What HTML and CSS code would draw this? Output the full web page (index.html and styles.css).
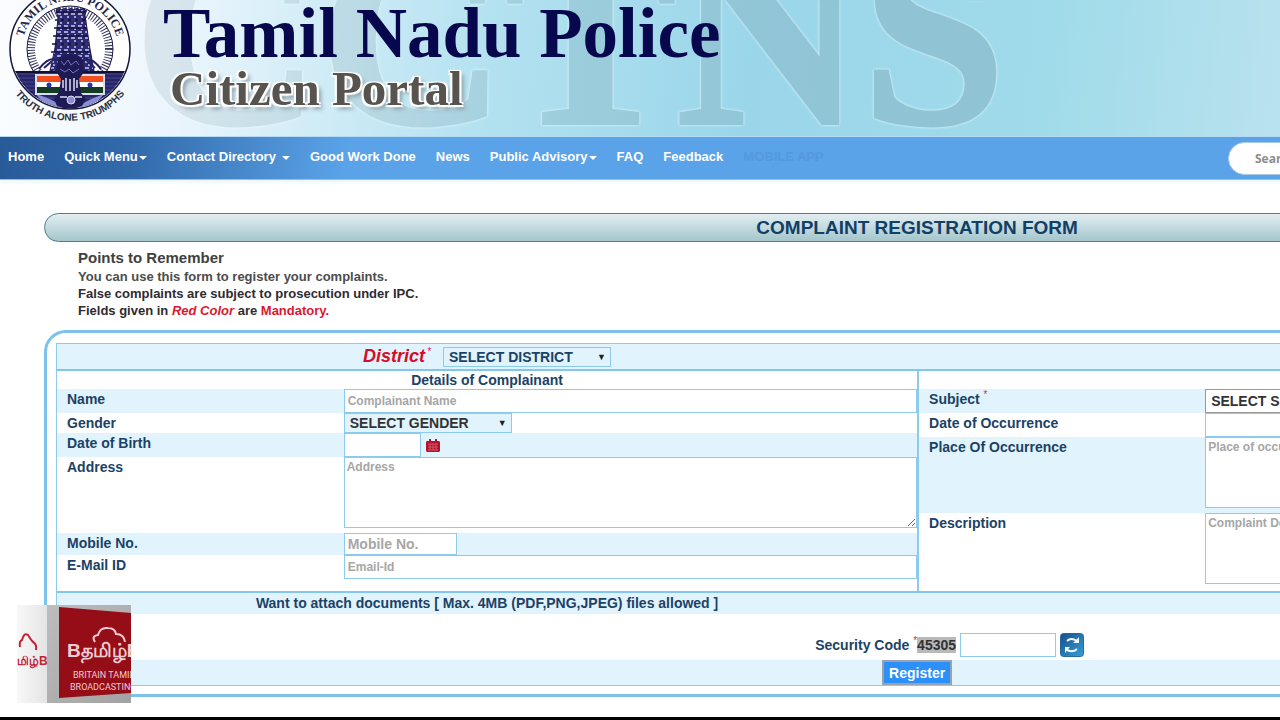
FILE: index.html
```
<!DOCTYPE html>
<html lang="en">
  <head>
    <meta charset="UTF-8" />
    <meta name="viewport" content="width=device-width, initial-scale=1.0" />
    <title>Tamil Nadu Police - Complaint Registration</title>
    <link rel="stylesheet" href="styles.css">
  </head>
  <body>
    <div class="page">
      <header class="banner">
        <svg class="watermark" width="1100" height="136" viewBox="0 0 1100 136" aria-hidden="true">
          <defs>
            <linearGradient id="fade" gradientUnits="userSpaceOnUse" x1="140" y1="0" x2="1000" y2="0">
              <stop offset="0" stop-color="#c9d9e0" />
              <stop offset="0.500" stop-color="#8fbecb" />
              <stop offset="1" stop-color="#82aebf" />
            </linearGradient>
          </defs>
          <text x="134" y="123" fill="url(#fade)" stroke="url(#fade)">CCTNS</text>
        </svg>
        <svg class="emblem" width="140" height="130" viewBox="0 0 140 130" role="img" aria-label="Tamil Nadu Police emblem">
          <defs>
            <path id="arc-top" d="M22 49 A48 48 0 0 1 118 49" />
            <path id="arc-bottom" d="M9 84 A69 69 0 0 0 131 84" />
            <clipPath id="disc"><circle cx="70" cy="49" r="59" /></clipPath>
            <pattern id="bricks" width="7" height="6" patternUnits="userSpaceOnUse">
              <rect width="7" height="6" fill="#2b2973" />
              <path d="M1 2h4M4 5h2" stroke="#c9c9ee" stroke-width="1.500" />
            </pattern>
          </defs>
          <circle cx="70" cy="49" r="60" fill="#fff" stroke="#15153a" stroke-width="1.500" />
          <circle cx="70" cy="49" r="43" fill="#fff" stroke="#15153a" stroke-width="1" />
          <circle cx="70" cy="49" r="39" fill="none" stroke="#33335c" stroke-width="8" stroke-dasharray="1 1.800" />
          <g clip-path="url(#disc)">
            <rect x="8" y="71" width="124" height="40" fill="#36347b" />
            <path d="M8 72h124" stroke="#101035" stroke-width="2" />
            <path d="M12 76h116M14 80h112M16 84h108M20 88h100M23 92h94M28 96h84M36 100h68M43 104h54" stroke="#191750" stroke-width="1" />
            <path d="M36 94Q52 99 58 104L82 104Q92 98 104 94L98 101L83 109H57L42 102Z" fill="#8b8ed3" />
          </g>
          <path d="M56 10l3-2 3 2 3-2 3 2 3-2 3 2 3-2 3 2 3-2 3 3-1 4 5 34 4 22H50l5-23 3-30Z" fill="url(#bricks)" stroke="#1a184f" />
          <path d="M56 12h29M55 20h31M54 28h33M53 36h35M52 44h37M51 52h40" stroke="#14123f" stroke-width="1.500" />
          <path d="M39 69q10-13 18-9M101 69q-10-13-18-9M44 68l8-7M95 68l-8-7" fill="none" stroke="#252364" stroke-width="2" />
          <rect x="35" y="74" width="70" height="21" fill="#d9dcf5" />
          <rect x="37" y="76" width="66" height="6" fill="#f14f1d" />
          <rect x="37" y="82" width="66" height="5" fill="#fff" />
          <rect x="37" y="87" width="66" height="6" fill="#143b22" />
          <circle cx="49" cy="85" r="2.500" fill="#2b35aa" />
          <circle cx="90" cy="85" r="2.500" fill="#2b35aa" />
          <path d="M58 60q2-6 12-6t13 6l1 12-5 7 2 14 5 6-4 7q-12 5-25 0l-3-7 5-7 2-13-5-8Z" fill="#1d1a54" />
          <path d="M63 80v8M66 78v13M70 79v12M74 78v13M77 80v8M60 97h7M75 97h7" stroke="#dcdcf4" stroke-width="1.500" />
          <path d="M61 61l3 4 4-5 3 5 5-4 3 4M60 69l5 3 4-3 4 4 6-4" fill="none" stroke="#7673bd" />
          <circle cx="71" cy="100" r="4" fill="#8c8cd0" stroke="#dcdcf4" />
          <text class="motto-top"><textPath href="#arc-top" startOffset="50%">TAMIL NADU POLICE</textPath></text>
          <text class="motto-bottom"><textPath href="#arc-bottom" startOffset="50%">TRUTH ALONE TRIUMPHS</textPath></text>
        </svg>
        <div class="brand">
          <h1>Tamil Nadu Police</h1>
          <p>Citizen Portal</p>
        </div>
      </header>

      <nav class="navbar">
        <a href="#">Home</a>
        <a href="#" class="has-menu">Quick Menu</a>
        <a href="#" class="has-menu spaced">Contact Directory</a>
        <a href="#">Good Work Done</a>
        <a href="#">News</a>
        <a href="#" class="has-menu">Public Advisory</a>
        <a href="#">FAQ</a>
        <a href="#">Feedback</a>
        <a href="#" class="faded">MOBILE APP</a>
        <div class="search">
          <input type="search" placeholder="Search" aria-label="Search" />
        </div>
      </nav>

      <main class="content">
        <h2 class="title">COMPLAINT REGISTRATION FORM</h2>

        <section class="notes">
          <h3>Points to Remember</h3>
          <p class="soft">You can use this form to register your complaints.</p>
          <p>False complaints are subject to prosecution under IPC.</p>
          <p>Fields given in <em>Red Color</em> are <b>Mandatory.</b></p>
        </section>

        <form class="frame">
          <div class="sheet">
            <div class="district">
              <div class="district-pick">
                <label for="district">District <sup>*</sup></label>
                <span class="select">
                  <select id="district"><option>SELECT DISTRICT</option></select>
                </span>
              </div>
            </div>

            <div class="columns">
              <div class="column">
                <h4>Details of Complainant</h4>
                <div class="row tint">
                  <label for="name">Name</label>
                  <input type="text" id="name" placeholder="Complainant Name" />
                </div>
                <div class="row short">
                  <label for="gender">Gender</label>
                  <span class="select">
                    <select id="gender"><option>SELECT GENDER</option></select>
                  </span>
                </div>
                <div class="row tint">
                  <label for="dob">Date of Birth</label>
                  <div class="date">
                    <input type="text" id="dob" />
                    <button type="button" class="calendar" aria-label="Pick a date">
                      <svg width="14" height="13" viewBox="0 0 14 13">
                        <path d="M1 2h2V0h2v2h4V0h2v2h2l1 1v9l-1 1H1l-1-1V3z" fill="#b3142c" />
                        <path d="M2 5h10M2 8h10M2 11h10M4 5v6M7 5v6M10 5v6" stroke="#cf5567" stroke-width="1" />
                      </svg>
                    </button>
                  </div>
                </div>
                <div class="row tall">
                  <label for="address">Address</label>
                  <textarea id="address" placeholder="Address"></textarea>
                </div>
                <div class="row medium tint">
                  <label for="mobile">Mobile No.</label>
                  <input type="text" id="mobile" class="mobile" placeholder="Mobile No." />
                </div>
                <div class="row">
                  <label for="email">E-Mail ID</label>
                  <input type="text" id="email" placeholder="Email-Id" />
                </div>
              </div>

              <div class="column">
                <h4>Details of Complaint</h4>
                <div class="row tint">
                  <label for="subject">Subject <sup>*</sup></label>
                  <select id="subject" class="subject"><option>SELECT SUBJECT</option></select>
                </div>
                <div class="row">
                  <label for="occurred">Date of Occurrence</label>
                  <input type="text" id="occurred" />
                </div>
                <div class="row tall tint">
                  <label for="place">Place Of Occurrence</label>
                  <textarea id="place" placeholder="Place of occurrence"></textarea>
                </div>
                <div class="row tall">
                  <label for="description">Description</label>
                  <textarea id="description" placeholder="Complaint Description"></textarea>
                </div>
              </div>
            </div>

            <div class="attach">
              <p>Want to attach documents [ Max. 4MB (PDF,PNG,JPEG) files allowed ]</p>
            </div>

            <div class="security">
              <label for="code">Security Code <sup>*</sup></label>
              <div class="captcha">
                <span class="code">45305</span>
                <input type="text" id="code" />
                <button type="button" class="refresh" aria-label="Refresh code">
                  <svg width="24" height="24" viewBox="0 0 24 24">
                    <defs>
                      <linearGradient id="tile" x1="0" y1="0" x2="1" y2="1">
                        <stop offset="0" stop-color="#174f8a" />
                        <stop offset="1" stop-color="#35a0d8" />
                      </linearGradient>
                    </defs>
                    <rect x="0.500" y="0.500" width="23" height="23" rx="3" fill="url(#tile)" stroke="#2469a0" />
                    <path d="M7 8Q11 4 17 8M17 16Q13 20 7 17" fill="none" stroke="#eef8ff" stroke-width="2" />
                    <path d="M19 4v6h-6zM5 20v-6h5z" fill="#eef8ff" />
                  </svg>
                </button>
              </div>
            </div>

            <div class="actions">
              <button type="submit" class="register">Register</button>
            </div>
          </div>
        </form>
      </main>
      <footer class="edge"></footer>
    </div>

    <svg class="channel" width="114" height="98" viewBox="0 0 114 98" role="img" aria-label="Britain Tamil Broadcasting">
      <defs>
        <linearGradient id="side"><stop offset="0" stop-color="#f8f8f8" /><stop offset="1" stop-color="#e4e4e4" /></linearGradient>
        <linearGradient id="front" x1="0" y1="0" x2="1" y2="1"><stop offset="0" stop-color="#bdbdbd" /><stop offset="1" stop-color="#a2a2a2" /></linearGradient>
      </defs>
      <rect width="30" height="98" fill="url(#side)" />
      <rect x="30" width="84" height="98" fill="url(#front)" />
      <path d="M42 2L114 8V88L42 93Z" fill="#950d17" />
      <path d="M78 37Q74 31 81 30Q83 22 91 23Q98 23 99 29Q107 29 108 37" fill="none" stroke="#f0ccd2" stroke-width="2" />
      <path d="M3 42Q2 36 5 35Q7 27 11 30Q14 35 16 37Q20 39 19 45" fill="none" stroke="#c02336" stroke-width="2" />
      <text class="mark-side" x="-8" y="60">தமிழ்B</text>
      <text class="mark" x="50" y="52">Bதமிழ்B</text>
      <text class="caption" x="56" y="73">BRITAIN TAMIL</text>
      <text class="caption" x="53" y="85">BROADCASTING</text>
    </svg>
  </body>
</html>
```
FILE: styles.css
```
* {
  box-sizing: border-box;
}

body {
  margin: 0;
  overflow: hidden;
  background-color: #fff;
  font-family: "Liberation Sans", Arial, sans-serif;
  font-size: 14px;
  font-weight: bold;
  color: #1b4266;
}

h1, h2, h3, h4, p {
  margin: 0;
}

/* the portal is laid out wider than the window and runs off to the right */
.page {
  width: 143.3vw;
  min-height: 100vh;
  display: flex;
  flex-direction: column;
}

.banner {
  position: relative;
  height: 137px;
  display: flex;
  overflow: hidden;
  border-bottom: 1px solid #b5dcf2;
  background: linear-gradient(97deg, #fbfdff 0%, #eef6fd 9%, #d3edf7 17%, #b3e1f0 27%, #9ad6ea 41%, #a0dbea 57%, #b9e2ee 70%, #cdeaf3 100%);
}

.watermark {
  position: absolute;
  top: 0;
  left: 0;
  opacity: 0.5;
  filter: drop-shadow(0 0 1px #fff) drop-shadow(0 0 1px #e4f6fa);
}

.watermark text {
  font-family: "Liberation Serif", serif;
  font-size: 257px;
  font-weight: bold;
  stroke-width: 4px;
}

.emblem {
  position: relative;
  flex: none;
}

.motto-top {
  font: bold 12px "Liberation Serif", serif;
  fill: #24244a;
  text-anchor: middle;
}

.motto-bottom {
  font: bold 10px "Liberation Sans", sans-serif;
  fill: #30303c;
  text-anchor: middle;
}

.brand {
  position: relative;
  padding-left: 23px;
  font-family: "Liberation Serif", serif;
  white-space: nowrap;
}

.brand h1 {
  font-size: 71px;
  line-height: 66px;
  color: #07074d;
}

.brand p {
  padding-left: 7px;
  font-size: 49px;
  line-height: 46px;
  color: #57534f;
  text-shadow: -2px -1px 1px #fff, 2px -1px 1px #fff, -2px 2px 1px #fff, 2px 2px 1px #fff, 4px 4px 4px #8a9aa2;
}

.navbar {
  height: 43px;
  display: flex;
  align-items: center;
  gap: 20px;
  padding-left: 8px;
  border-bottom: 1px solid #8cc3ee;
  background: linear-gradient(100deg, #285a98 0%, #3169aa 7%, #5aa3e8 19%);
  box-shadow: 0 3px 3px #eef8fc;
}

.navbar a {
  padding-bottom: 3px;
  font-size: 13px;
  color: #fff;
  text-decoration: none;
  white-space: nowrap;
}

.has-menu::after {
  content: "";
  display: inline-block;
  vertical-align: middle;
  margin-left: 1px;
  border: 4px solid transparent;
  border-top-color: #fff;
  border-bottom: 0;
}

.spaced::after {
  margin-left: 6px;
}

.navbar .faded {
  color: #5499dd;
}

.search {
  width: 33.2%;
  margin-left: auto;
  padding-top: 1px;
}

.search input {
  width: 220px;
  height: 33px;
  padding: 0 26px;
  border: 1px solid #a9c8e4;
  border-radius: 17px;
  background-color: #fff;
  font: bold 12px "Open Sans", sans-serif;
}

.search ::placeholder {
  color: #8c8c8c;
}

.content {
  flex: 1;
  padding: 33px 44px 0;
}

.title {
  height: 29px;
  border: 1px solid #527a91;
  border-radius: 15px;
  background: linear-gradient(#e3eef1, #a3c6cc);
  font-size: 19px;
  line-height: 27px;
  text-align: center;
  color: #133f66;
}

.notes {
  padding: 5px 34px 11px;
  font-size: 13px;
  line-height: 17px;
  color: #2f2b31;
}

.notes h3 {
  font-size: 15px;
  line-height: 21px;
  color: #3f3f3f;
}

.notes .soft {
  color: #4c4c4c;
}

.notes em,
.notes b {
  color: #d9182f;
}

.frame {
  padding: 10px 9px 8px;
  border: 3px solid #7cc2ea;
  border-radius: 22px 22px 0 0;
}

.sheet {
  border: 1px solid #8ccbee;
}

.district {
  display: grid;
  grid-template-columns: 1fr 1fr;
  height: 27px;
  border-bottom: 2px solid #82c6ef;
  background-color: #e1f4fd;
}

.district-pick {
  display: flex;
  justify-content: center;
  align-items: center;
  gap: 12px;
}

.district label {
  font-size: 18px;
  font-style: italic;
  color: #d30d27;
}

.district sup {
  margin-left: -3px;
}

sup {
  font-size: 10px;
  font-weight: normal;
  line-height: 0;
  color: #e0283e;
}

input,
textarea,
select {
  margin: 0;
  border: 1px solid #8ccbee;
  border-radius: 0;
  background-color: #fff;
  font-family: inherit;
  font-size: 12px;
  font-weight: bold;
  color: #333;
  outline: none;
}

::placeholder {
  color: #a6a6a6;
}

.select {
  position: relative;
  justify-self: start;
}

.select::after {
  content: "▼";
  position: absolute;
  top: 5px;
  right: 5px;
  font-size: 9px;
  line-height: 10px;
  color: #222;
  pointer-events: none;
}

select {
  appearance: none;
  display: block;
  width: 168px;
  height: 20px;
  padding: 0 5px;
  background-color: #e1f4fd;
  font-size: 14px;
}

.district select {
  color: #1b4266;
}

.columns {
  display: grid;
  grid-template-columns: 1fr 1fr;
}

.column {
  padding-bottom: 12px;
}

.column + .column {
  padding-bottom: 0;
  border-left: 2px solid #8ccbee;
}

.column h4 {
  font-size: 14px;
  line-height: 18px;
  text-align: center;
}

.row {
  display: grid;
  grid-template-columns: 1fr 2fr;
  height: 24px;
}

.row.short {
  height: 20px;
}

.row.medium {
  height: 22px;
}

.row.tall {
  height: 76px;
}

.tint {
  background-color: #e1f4fd;
}

.row label {
  padding: 2px 10px 0;
  line-height: 16px;
}

.row input {
  width: 100%;
  height: 100%;
  padding: 0 3px;
}

.row textarea {
  width: 100%;
  height: 71px;
  padding: 2px;
  resize: vertical;
}

.row .mobile {
  width: 113px;
  font-size: 14px;
}

.row .subject {
  width: 260px;
  height: 24px;
  border-color: #999;
  background-color: #fff;
}

.date {
  display: flex;
  align-items: center;
  gap: 5px;
}

.date input {
  width: 77px;
}

.calendar,
.refresh {
  display: flex;
  padding: 0;
  border: none;
  background: none;
  cursor: pointer;
}

.attach {
  display: grid;
  grid-template-columns: 1fr 1fr;
  height: 23px;
  border-top: 2px solid #82c6ef;
  background-color: #e1f4fd;
  line-height: 20px;
  text-align: center;
}

.security {
  display: grid;
  grid-template-columns: 1fr 1fr;
  align-items: center;
  height: 46px;
  padding-top: 16px;
}

.security label {
  text-align: right;
}

.captcha {
  display: flex;
  align-items: center;
  gap: 4px;
}

.captcha input {
  width: 96px;
  height: 24px;
}

.code {
  background-color: #b9b9b9;
  color: #333;
}

.actions {
  display: flex;
  justify-content: center;
  height: 25px;
  background-color: #e1f4fd;
}

.register {
  padding: 0 5px;
  border: 2px solid #9aa3ad;
  background-color: #2c90fa;
  font-family: inherit;
  font-size: 14px;
  font-weight: bold;
  color: #fff;
  cursor: pointer;
}

.edge {
  height: 3px;
  background-color: #000;
}

/* channel badge lying over the corner of the form */
.channel {
  position: fixed;
  left: 17px;
  bottom: 17px;
}

.mark {
  font: bold 19px "Liberation Sans", sans-serif;
  fill: #f0ccd2;
}

.mark-side {
  font: bold 12px "Liberation Sans", sans-serif;
  fill: #c02336;
}

.caption {
  font: 9px Roboto, sans-serif;
  fill: #f0ccd2;
}
```
